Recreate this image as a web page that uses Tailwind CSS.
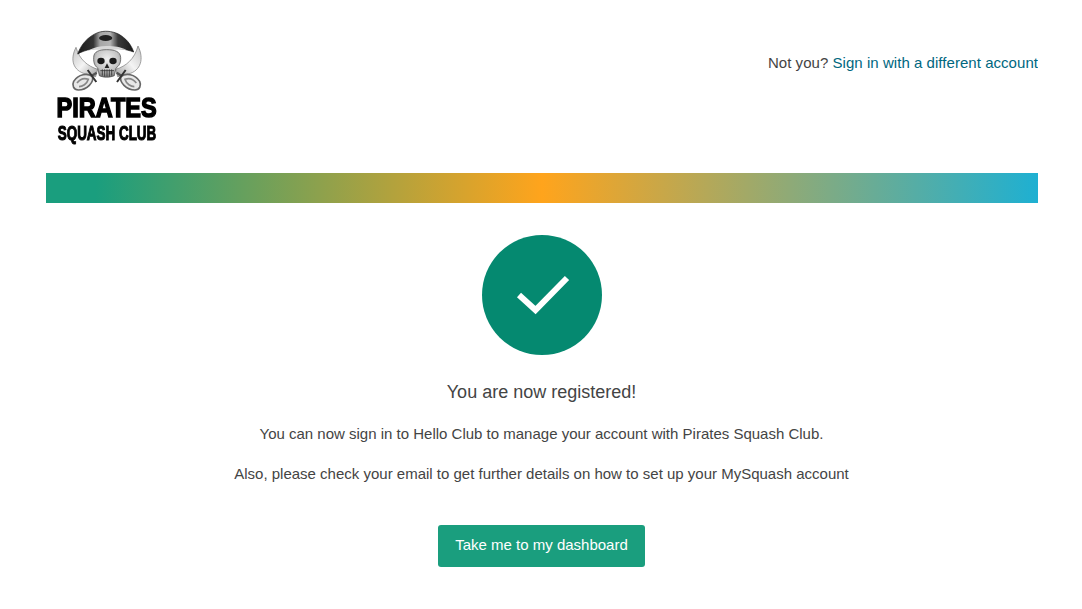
<!DOCTYPE html>
<html><head><meta charset="utf-8"><script src="https://cdn.jsdelivr.net/npm/@tailwindcss/browser@4"></script></head>
<body class="bg-white font-['Liberation_Sans',Arial,sans-serif] text-[#444444]">
<div class="mx-[46px] w-[992px] h-[609px] overflow-hidden">
  <header class="h-[173px] flex justify-between items-start">
    <div class="w-[103px] ml-[9px] pt-[28px]">
      <svg class="block ml-[10px] blur-[0.35px]" width="82" height="66" viewBox="0 0 246 198">
        <defs>
          <linearGradient id="b1" x1="0" y1="0" x2="1" y2="1"><stop offset="0" stop-color="#c4c4c4"/><stop offset=".5" stop-color="#f4f4f4"/><stop offset="1" stop-color="#a0a0a0"/></linearGradient>
          <linearGradient id="b2" x1="1" y1="0" x2="0" y2="1"><stop offset="0" stop-color="#c4c4c4"/><stop offset=".5" stop-color="#f4f4f4"/><stop offset="1" stop-color="#a0a0a0"/></linearGradient>
          <linearGradient id="hat" x1="0" y1="0" x2="1" y2="0"><stop offset="0" stop-color="#1c1c1c"/><stop offset=".28" stop-color="#333"/><stop offset=".4" stop-color="#a6a6a6"/><stop offset=".58" stop-color="#b4b4b4"/><stop offset=".72" stop-color="#3a3a3a"/><stop offset="1" stop-color="#1a1a1a"/></linearGradient>
          <radialGradient id="sk" cx=".5" cy=".35" r=".7"><stop offset="0" stop-color="#efefef"/><stop offset=".6" stop-color="#c4c4c4"/><stop offset="1" stop-color="#6a6a6a"/></radialGradient>
        </defs>
        <path d="M33 58 C14 95 24 128 62 138 L92 146 L98 124 C68 114 44 96 33 58Z" fill="url(#b1)" stroke="#777" stroke-width="2"/>
        <path d="M219 54 C238 92 228 128 190 138 L158 146 L152 124 C184 114 208 94 219 54Z" fill="url(#b2)" stroke="#777" stroke-width="2"/>
        <path d="M95 134 L50 162 M155 134 L198 162" stroke="#555" stroke-width="7" fill="none"/>
        <path d="M26 160 C40 138 68 134 82 146 C88 162 66 186 40 186 C26 186 20 172 26 160Z" fill="#e8e8e8" stroke="#666" stroke-width="5"/>
        <path d="M36 165 C46 152 60 150 70 154 C66 168 52 176 42 176" fill="none" stroke="#888" stroke-width="5"/>
        <path d="M224 160 C210 138 182 134 168 146 C162 162 184 186 210 186 C224 186 230 172 224 160Z" fill="#e8e8e8" stroke="#666" stroke-width="5"/>
        <path d="M214 165 C204 152 190 150 180 154 C184 168 198 176 208 176" fill="none" stroke="#888" stroke-width="5"/>
        <path d="M68 126 L94 162 M182 126 L156 162" stroke="#333" stroke-width="6"/>
        <path d="M38 78 C48 50 68 26 98 14 C118 7 140 9 160 18 C182 30 198 48 206 72 C178 62 158 60 125 60 C92 60 62 64 38 78Z" fill="url(#hat)" stroke="#111" stroke-width="2"/>
        <ellipse cx="122" cy="30" rx="20" ry="9" fill="#222"/>
        <path d="M68 68 C88 58 106 54 125 54 C148 54 166 56 184 66 C164 62 150 66 125 66 C100 66 84 64 68 68Z" fill="#d8d8d8"/>
        <path d="M86 88 C86 70 104 65 125 65 C148 65 166 70 167 88 C168 106 162 114 153 120 L148 143 C134 149 116 149 103 143 L98 120 C90 114 85 106 86 88Z" fill="url(#sk)" stroke="#444" stroke-width="2"/>
        <ellipse cx="108" cy="99" rx="11" ry="9.500" fill="#1a1a1a"/>
        <ellipse cx="144" cy="99" rx="11" ry="9.500" fill="#1a1a1a"/>
        <path d="M126 106 L119 120 L133 120Z" fill="#222"/>
        <path d="M106 128 H147 M112 124 V143 M119 124 V146 M126 124 V146 M133 124 V146 M140 124 V143" stroke="#333" stroke-width="2.5"/>
      </svg>
      <div class="w-[103px] font-bold text-black">
        <div class="flex justify-center">
          <div class="shrink-0 text-[28px] leading-[28px] h-[28px] scale-x-[.84] [-webkit-text-stroke:1.5px_black] whitespace-nowrap">PIRATES</div>
        </div>
        <div class="flex justify-center">
          <div class="shrink-0 text-[21px] leading-[21px] h-[21px] scale-x-[.64] [-webkit-text-stroke:1.1px_black] whitespace-nowrap">SQUASH CLUB</div>
        </div>
      </div>
    </div>
    <p class="text-[15px] leading-[20px] mt-[53px] tracking-[.003em]">Not you? <a class="text-[#00677f]">Sign in with a different account</a></p>
  </header>
  <div class="h-[30px] bg-[linear-gradient(90deg,#1a9e7e_0%,#1a9e7e_5%,#ffa41c_50%,#1eb0d2_100%)]"></div>
  <main class="pr-[1px] flex flex-col items-center text-center">
    <div class="mt-[32px] ml-[1px] w-[120px] h-[120px] rounded-full bg-[#058970] flex items-center justify-center">
      <svg class="ml-[1px]" width="54" height="42" viewBox="0 0 54 42"><path d="M3 21 L19.500 36 L51 4" fill="none" stroke="#fff" stroke-width="6"/></svg>
    </div>
    <h1 class="mt-[25px] text-[18px] leading-[24px]">You are now registered!</h1>
    <p class="mt-[20px] text-[15px] leading-[20px]">You can now sign in to Hello Club to manage your account with Pirates Squash Club.</p>
    <p class="mt-[20px] text-[15px] leading-[20px]">Also, please check your email to get further details on how to set up your MySquash account</p>
    <a class="mt-[41px] w-[207px] h-[42px] pb-[2px] rounded-[3px] bg-[#1a9e7e] text-white text-[15px] flex items-center justify-center">Take me to my dashboard</a>
  </main>
</div>
</body></html>
